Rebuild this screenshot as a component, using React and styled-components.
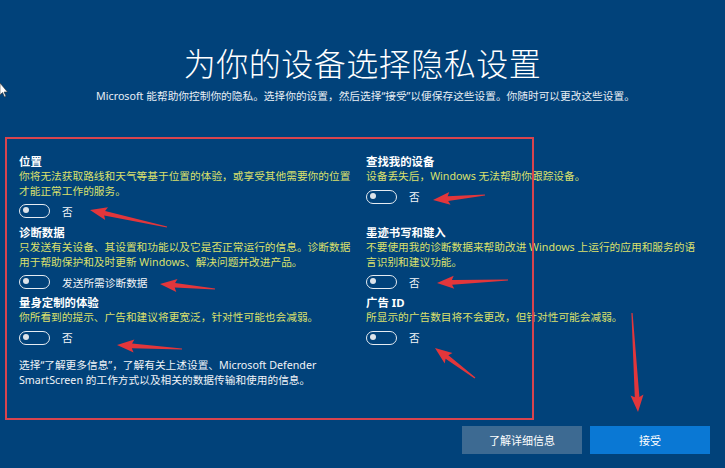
import React from "react";
import styled, { createGlobalStyle } from "styled-components";

const GlobalStyle = createGlobalStyle`
  html, body {
    margin: 0;
    padding: 0;
    background: #01427a;
  }
  * {
    box-sizing: border-box;
  }
`;

const FONT = `"Segoe UI", "Noto Sans", "Noto Sans CJK SC", sans-serif`;

const Screen = styled.div`
  position: relative;
  width: 725px;
  height: 468px;
  overflow: hidden;
  background: #01427a;
  color: #ffffff;
  font-family: ${FONT};
  display: flex;
  flex-direction: column;
`;

const Header = styled.header`
  padding-top: 46px;
  text-align: center;
`;

const Title = styled.h1`
  margin: 0;
  font-size: 32px;
  line-height: 36px;
  font-weight: 300;
  letter-spacing: 0.5px;
`;

const Subtitle = styled.p`
  margin: 7px 0 0 6px;
  font-size: 10.7px;
  line-height: 15px;
  color: #e8eef5;
`;

const Main = styled.main`
  flex: 1;
  padding: 50px 0 0 19px;
`;

const Grid = styled.div`
  display: grid;
  grid-template-columns: 335px 330px;
  column-gap: 12px;
  align-items: start;
`;

const Section = styled.section`
  margin-bottom: ${(p) => p.gap || 6}px;
`;

const Heading = styled.div`
  font-size: 11.4px;
  line-height: 15px;
  font-weight: 700;
  color: #ffffff;
`;

const Desc = styled.div`
  font-size: 10.7px;
  line-height: 14.5px;
  color: #dbe06c;
`;

const ToggleRow = styled.div`
  display: flex;
  align-items: center;
  gap: 12px;
  height: 16px;
  margin-top: 5px;
  font-size: 10.7px;
  color: #f2f5f8;
`;

const Track = styled.span`
  position: relative;
  display: inline-block;
  width: 31px;
  height: 14px;
  border: 1.6px solid #e6ecf2;
  border-radius: 8px;
`;

const Knob = styled.span`
  position: absolute;
  left: 3px;
  top: 2.4px;
  width: 6px;
  height: 6px;
  border-radius: 50%;
  background: #dce3ea;
`;

const Info = styled.p`
  grid-column: 1;
  margin: 6px 0 0;
  font-size: 10.7px;
  line-height: 15px;
  color: #f0f3f7;
`;

const Footer = styled.footer`
  display: flex;
  justify-content: flex-end;
  gap: 8px;
  padding: 0 15px 14px 0;
`;

const Button = styled.button`
  width: 120px;
  height: 28px;
  border: none;
  font-family: ${FONT};
  font-size: 11px;
  color: #ffffff;
  background: ${(p) => (p.primary ? "#0a78d4" : "#3d6a92")};
`;

const Frame = styled.div`
  position: absolute;
  left: 5px;
  top: 137px;
  width: 529px;
  height: 283px;
  border: 2px solid #d8444e;
  pointer-events: none;
`;

const Overlay = styled.svg`
  position: absolute;
  left: 0;
  top: 0;
  pointer-events: none;
`;

const Toggle = ({ label }) => (
  <ToggleRow>
    <Track>
      <Knob />
    </Track>
    {label}
  </ToggleRow>
);

const arrows = [
  [167, 227, 90, 210],
  [215, 289, 160, 284],
  [182, 349, 117, 345],
  [485, 195, 433, 200],
  [508, 280, 437, 283],
  [475, 378, 435, 348],
  [632, 313, 638, 412],
];

const arrowPoints = ([x1, y1, x2, y2]) => {
  const dx = x2 - x1;
  const dy = y2 - y1;
  const len = Math.hypot(dx, dy);
  const ux = dx / len;
  const uy = dy / len;
  const nx = -uy;
  const ny = ux;
  const headLen = 15;
  const headW = 6.5;
  const bx = x2 - ux * headLen;
  const by = y2 - uy * headLen;
  const tail = 0.6;
  const neck = 2.3;
  const pts = [
    [x1 + nx * tail, y1 + ny * tail],
    [bx + nx * neck, by + ny * neck],
    [bx + nx * headW - ux * 2, by + ny * headW - uy * 2],
    [x2, y2],
    [bx - nx * headW - ux * 2, by - ny * headW - uy * 2],
    [bx - nx * neck, by - ny * neck],
    [x1 - nx * tail, y1 - ny * tail],
  ];
  return pts.map((p) => p.map((v) => v.toFixed(1)).join(",")).join(" ");
};

const App = () => {
  return (
    <>
      <GlobalStyle />
      <Screen>
        <Header>
          <Title>为你的设备选择隐私设置</Title>
          <Subtitle>
            Microsoft 能帮助你控制你的隐私。选择你的设置，然后选择“接受”以便保存这些设置。你随时可以更改这些设置。
          </Subtitle>
        </Header>

        <Main>
          <Grid>
            <Section>
              <Heading>位置</Heading>
              <Desc>
                你将无法获取路线和天气等基于位置的体验，或享受其他需要你的位置才能正常工作的服务。
              </Desc>
              <Toggle label="否" />
            </Section>
            <Section>
              <Heading>查找我的设备</Heading>
              <Desc>设备丢失后，Windows 无法帮助你跟踪设备。</Desc>
              <Toggle label="否" />
            </Section>

            <Section gap={5}>
              <Heading>诊断数据</Heading>
              <Desc>
                只发送有关设备、其设置和功能以及它是否正常运行的信息。诊断数据用于帮助保护和及时更新 Windows、解决问题并改进产品。
              </Desc>
              <Toggle label="发送所需诊断数据" />
            </Section>
            <Section gap={5}>
              <Heading>墨迹书写和键入</Heading>
              <Desc>
                不要使用我的诊断数据来帮助改进 Windows 上运行的应用和服务的语言识别和建议功能。
              </Desc>
              <Toggle label="否" />
            </Section>

            <Section gap={0}>
              <Heading>量身定制的体验</Heading>
              <Desc>你所看到的提示、广告和建议将更宽泛，针对性可能也会减弱。</Desc>
              <Toggle label="否" />
            </Section>
            <Section gap={0}>
              <Heading>广告 ID</Heading>
              <Desc>所显示的广告数目将不会更改，但针对性可能会减弱。</Desc>
              <Toggle label="否" />
            </Section>

            <Info>
              选择“了解更多信息”，了解有关上述设置、Microsoft Defender SmartScreen 的工作方式以及相关的数据传输和使用的信息。
            </Info>
          </Grid>
        </Main>

        <Footer>
          <Button>了解详细信息</Button>
          <Button primary>接受</Button>
        </Footer>

        <Frame />

        <Overlay width="725" height="468" viewBox="0 0 725 468">
          <path
            d="M0 83 L0 95 L2.5 92.5 L4.5 97 L6 96.3 L4 92 L7.5 92 Z"
            fill="#ffffff"
            stroke="#333"
            strokeWidth="0.6"
          />
          {arrows.map((a, i) => (
            <polygon key={i} points={arrowPoints(a)} fill="#e2363b" />
          ))}
        </Overlay>
      </Screen>
    </>
  );
};

export default App;
